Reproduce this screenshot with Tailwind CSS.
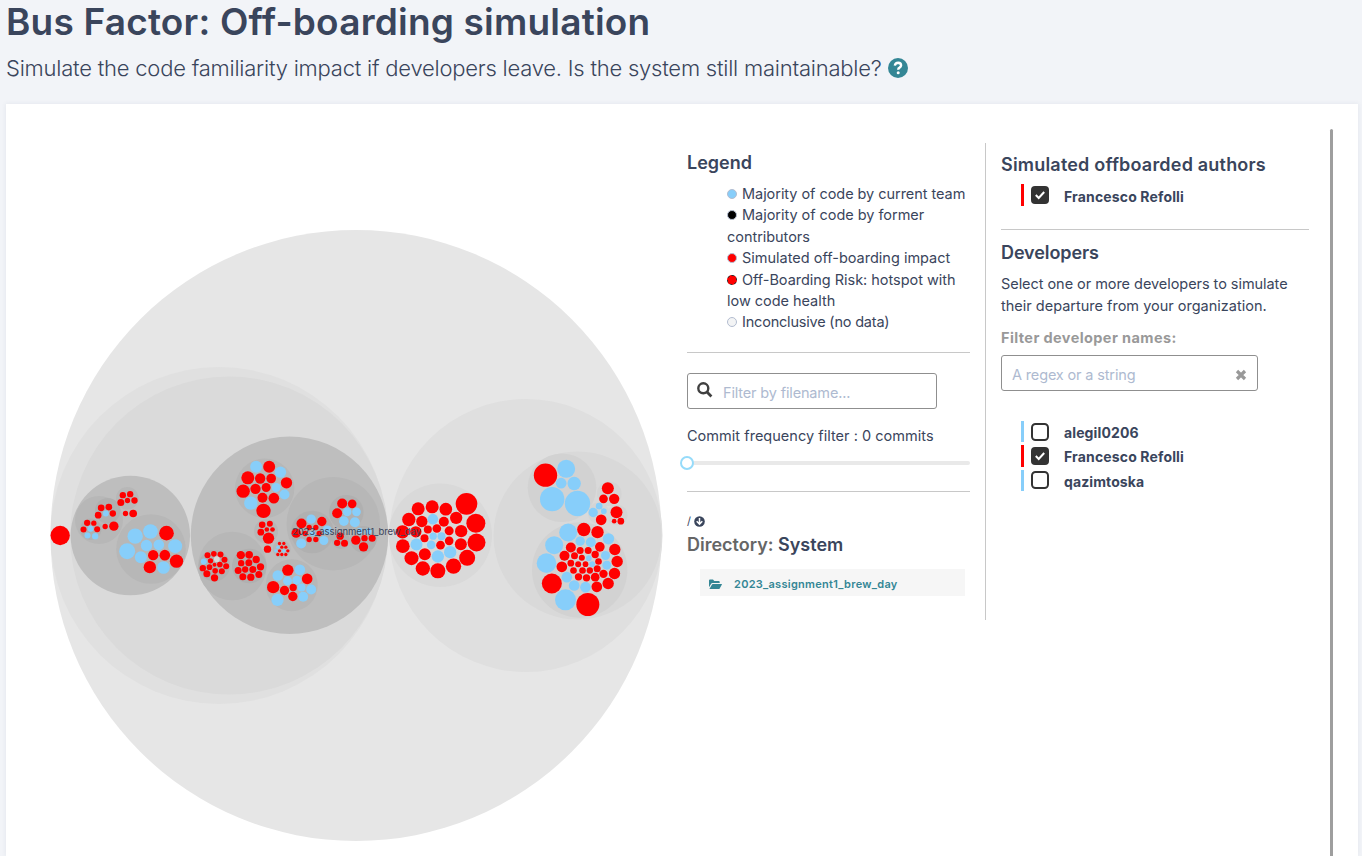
<!DOCTYPE html>
<html lang="en">
<head>
<meta charset="utf-8">
<title>Bus Factor: Off-boarding simulation</title>
<script src="https://cdn.jsdelivr.net/npm/@tailwindcss/browser@4"></script>
</head>
<body class="h-[856px] overflow-hidden bg-[#f2f4f8] font-['Inter',sans-serif] text-[#3a455c]">
<header class="h-[104px] pl-1.5">
  <h1 class="h-[44px] whitespace-nowrap text-[37px] leading-[44px] font-semibold tracking-[0.2px]">Bus Factor: Off-boarding simulation</h1>
  <p class="flex h-[48px] items-center gap-1.5 whitespace-nowrap text-[22px] font-light"><span class="tracking-[-0.225px]">Simulate the code familiarity impact if developers leave. Is the system still maintainable?</span>
    <svg class="size-5" viewBox="0 0 20 20"><circle cx="10" cy="10" r="10" fill="#348695"/><path d="M6.8 7.6Q7.3 4.8 10.2 4.8Q13.1 4.9 13.1 7.4Q13 8.7 11.5 9.6Q10.2 10.3 10.2 11.7" fill="none" stroke="#fff" stroke-width="2.4"/><circle cx="10.2" cy="14.8" r="1.5" fill="#fff"/></svg>
  </p>
</header>
<main class="ml-1.5 flex h-[752px] w-[1352px] bg-white shadow-[0_0_5px_rgba(40,50,90,0.08)]">
  <svg class="h-[752px] w-[681px] shrink-0" viewBox="6 104 681 752">
    <g id="bubbles"></g>
    <text x="292" y="535" font-size="9.5" font-family="Inter" fill="#3a455c" textLength="129">2023_assignment1_brew_day</text>
  </svg>
  <section class="mt-[39px] h-[477px] w-[299px] shrink-0 border-r border-[#c8c8c8]">
    <div class="h-[210px] w-[283px] border-b border-[#c8c8c8]">
      <h2 class="h-[40px] text-[18px] leading-[39px] font-semibold">Legend</h2>
      <ul class="pl-10 text-[14.5px] leading-[21.4px] whitespace-nowrap">
        <li class="tracking-[-0.05px]"><i class="mr-[5px] inline-block size-2.5 rounded-full border border-[#b3bdd0] bg-[#87cefa]"></i>Majority of code by current team</li>
        <li class="tracking-[-0.04px]"><i class="mr-[5px] inline-block size-2.5 rounded-full border border-[#b3bdd0] bg-black"></i>Majority of code by former<br>contributors</li>
        <li><i class="mr-[5px] inline-block size-2.5 rounded-full border border-[#b3bdd0] bg-[red]"></i>Simulated off-boarding impact</li>
        <li class="tracking-[-0.03px]"><i class="mr-[5px] inline-block size-2.5 rounded-full border border-dashed border-[#222] bg-[red]"></i>Off-Boarding Risk: hotspot with<br>low code health</li>
        <li class="tracking-[-0.2px]"><i class="mr-[5px] inline-block size-2.5 rounded-full border border-[#b3bdd0] bg-[#f3f4f5]"></i>Inconclusive (no data)</li>
      </ul>
    </div>
    <div class="h-[139px] w-[283px] border-b border-[#c8c8c8] pt-5">
      <div class="flex h-9 w-[250px] items-center rounded-[3px] border border-[#8f8f8f] pl-[9px]">
        <svg class="size-4 -translate-y-px" viewBox="0 0 16 16"><circle cx="6.3" cy="6.3" r="5" fill="none" stroke="#404040" stroke-width="2.4"/><path d="M10 10L14.4 14.4" stroke="#404040" stroke-width="2.8"/></svg>
        <span class="ml-2.5 pt-1 text-[14.5px] tracking-[-0.15px] text-[#aebad0]">Filter by filename...</span>
      </div>
      <p class="mt-4 text-[14.5px] leading-[22px] tracking-[0.03px] whitespace-nowrap">Commit frequency filter : 0 commits</p>
      <div class="mt-[14px] flex h-1 items-center rounded-full bg-[#e9e9e9]"><div class="-ml-[7px] size-3.5 shrink-0 rounded-full border-2 border-[#96dbfa] bg-white"></div></div>
    </div>
    <div class="pt-[20px]">
      <div class="flex h-[18px] items-center gap-[3px] text-[11px]"><span class="pt-px">/</span><svg class="size-[11px]" viewBox="0 0 11 11"><circle cx="5.5" cy="5.5" r="5.3" fill="#3a455c"/><path d="M5.5 2V8M2.7 5.3L5.5 8.1L8.3 5.3" fill="none" stroke="#fff" stroke-width="1.5"/></svg></div>
      <h2 class="mt-px text-[18px] leading-7 font-semibold whitespace-nowrap"><span class="text-[#666]">Directory:</span> System</h2>
      <div class="mt-[10px] ml-[13px] flex h-[27px] w-[265px] items-center bg-[#f6f6f6] pt-1 pl-[9px] text-[#348695]">
        <svg class="h-[11px] w-[13px]" viewBox="0 0 13 11"><path d="M0 8.2V1.6Q0 .6 1 .6H4L5.3 2H9.7Q10.7 2 10.7 3V4H3.4Q2.5 4 2 4.9ZM.4 9.9L3 5.4Q3.2 5 3.7 5H12.6Q13.2 5 12.9 5.6L10.7 9.5Q10.4 10 9.9 10H.7Q.3 10 .4 9.9Z" fill="#348695"/></svg>
        <span class="ml-3 text-[11px] font-semibold tracking-[0.28px]">2023_assignment1_brew_day</span>
      </div>
    </div>
  </section>
  <section class="w-[344px] shrink-0 pt-[46px] pl-[15px]">
    <div class="h-[80px] w-[308px] border-b border-[#c8c8c8]">
      <h2 class="h-[34px] pt-px text-[18px] leading-[28px] font-semibold tracking-[0.2px] whitespace-nowrap">Simulated offboarded authors</h2>
      <div class="ml-5 flex h-[22px] items-center border-l-3 border-[red] text-[14px] font-bold"><svg class="ml-[7px] size-[18px]" viewBox="0 0 18 18"><rect width="18" height="18" rx="4" fill="#333"/><path d="M4.8 9L7.7 12L13.2 6" fill="none" stroke="#fff" stroke-width="2"/></svg><span class="ml-[15px] pt-0.5 tracking-[0.15px]">Francesco Refolli</span></div>
    </div>
    <h2 class="mt-[9px] h-[34px] text-[18px] leading-[28px] font-semibold tracking-[-0.1px]">Developers</h2>
    <p class="text-[14.5px] leading-[22px] tracking-[-0.05px] whitespace-nowrap">Select one or more developers to simulate<br><span class="tracking-[0px]">their departure from your organization.</span></p>
    <p class="mt-2.5 text-[14.5px] leading-[22px] font-bold tracking-[0.4px] text-[#999]">Filter developer names:</p>
    <div class="mt-[6px] flex h-9 w-[257px] items-center justify-between rounded-[3px] border border-[#8f8f8f] px-2.5 text-[14.5px] text-[#aebad0]"><span class="pt-1 tracking-[-0.15px]">A regex or a string</span><svg class="mt-1 size-3" viewBox="0 0 12 12"><path d="M2 2L10 10M10 2L2 10" stroke="#999" stroke-width="3.2"/></svg></div>
    <div class="mt-[30px] ml-5 flex flex-col gap-[3px] text-[14px] font-bold">
      <div class="flex h-[21px] items-center border-l-3 border-[#87cefa]"><svg class="ml-[7px] size-[18px]" viewBox="0 0 18 18"><rect x="1" y="1" width="16" height="16" rx="3.5" fill="#fff" stroke="#333" stroke-width="2"/></svg><span class="ml-[15px] pt-0.5 tracking-[0.12px]">alegil0206</span></div>
      <div class="flex h-[22px] items-center border-l-3 border-[red]"><svg class="ml-[7px] size-[18px]" viewBox="0 0 18 18"><rect width="18" height="18" rx="4" fill="#333"/><path d="M4.8 9L7.7 12L13.2 6" fill="none" stroke="#fff" stroke-width="2"/></svg><span class="ml-[15px] tracking-[0.15px]">Francesco Refolli</span></div>
      <div class="flex h-[21px] items-center border-l-3 border-[#87cefa]"><svg class="ml-[7px] size-[18px] -translate-y-px" viewBox="0 0 18 18"><rect x="1" y="1" width="16" height="16" rx="3.5" fill="#fff" stroke="#333" stroke-width="2"/></svg><span class="ml-[15px] pt-0.5 tracking-[0.1px]">qazimtoska</span></div>
    </div>
  </section>
  <div class="mt-[25px] w-[3px] rounded-t bg-[#9e9e9e]"></div>
</main>
<script>
// Directory circles: colour, then cx, cy, r triples.
const shades = [
  ['#e6e6e6', [356,535.5,305.5]], ['#e0e0e0', [219,535.5,168.5]], ['#dadada', [229,535.5,159]],
  ['#dfdfdf', [526,535.5,136.5]], ['#d9d9d9', [440.3,535.3,51.7]],
  ['#d9d9d9', [577.5,535.5,84]], ['#d2d2d2', [562,487.7,34.3, 579.7,570,47.7]],
  ['#d4d4d4', [609.3,493.7,12.3, 617.3,515,10.3, 598.7,513.3,10.7]],
  ['#bebebe', [130.3,535.5,59.7, 289.5,535.3,98.7]],
  ['#b7b7b7', [99,520,24, 127.3,498.3,11.3, 151,549,34.8, 264.7,488.3,29.7, 232.3,566,34.3, 266,531.3,12, 281.7,549,9, 291.7,585.3,26, 333.3,523.7,46.7]],
  ['#b0b0b0', [107.7,510.7,12.7, 90.7,529.3,10.7, 214.3,565.7,15.7, 249.3,566,17.3, 312.3,532,21.3, 346.3,512.3,17.3, 340.7,540,9, 363.3,539.3,13.3]]
];
// File circles: cluster origin, colour, then "x y r" in thirds of a pixel.
const files = [
 [40,460,'red','60 226 29,248 105 9.5,270 102 9.5,242 127 10.5,262 121 8,283 121 9.5,256 160 8,279 160 11.5,183 143 10,206 141 10,174 165 10,218 160 9.5,141 188 9.5,161 189 8,130 208 9,171 207 9,195 199 8,221 198 14,379 219 22,339 285 15.5,374 285 16,409 303 20,329 321 18.5'],
 [40,460,'#87cefa','197 160 9,151 206 9,142 226 9,165 228 9.5,285 228 23,331 214 22,261 273 24,319 256 17,356 254 16,405 258 21,302 291 18,370 322 19'],
 [190,430,'red','237 110 18,173 143 19.5,210 145 15.5,243 145 14.5,289 158 17,159 183 20,196 176 15.5,228 172 13.5,217 203 15,251 204 16,220 242 21.5'],
 [190,430,'#87cefa','198 110 18,271 126 17,258 172 13.5,283 193 15,182 219 20'],
 [190,520,'red','216 14 10,239 11 9,212 36 10,230 28 7,247 28 7,235 54 17,232 87 11,268 70 5,281 70 5,275 81 5,287 81 5,268 92 5,293 92 5,263 103 5,275 103 5,287 103 5,52 105 9,71 101 8.5,91 103 9,61 122 8,103 119 9,38 144 9.5,58 141 8.5,73 134 6,89 133 8.5,108 138 9,75 152 8.5,95 153 9,50 161 10.5,73 173 11,152 105 12.5,177 104 11.5,198 118 11,153 129 9.5,176 128 10.5,211 140 11,144 151 10.5,165 148 9.5,188 148 10.5,206 163 10.5,158 170 10.5,182 171 11,293 150 17,249 201 18.5,283 211 14,309 202 11,308 229 14'],
 [190,520,'#87cefa','41 124 9,263 81 5,257 92 5,281 92 5,263 166 16,292 182 13.5,262 239 18.5,329 149 16,320 180 13.5'],
 [190,520,'#d9d9d9','80 117 8.5'],
 [285,470,'red','66 326 16,49 160 15,110 154 14,72 172 8,92 172 8,33 189 14,102 190 8,60 190 8,72 208 8,92 208 8,171 100 15,201 101 13,156 129 15,156 218 9.5,178 219 10.5,165 198 11,212 210 14,238 204 9.5,261 204 10.5,235 230 14'],
 [285,470,'#87cefa','78 358 15,49 352 12,54 380 15,78 147 14,126 180 14,82 190 8,48 220 15,116 211 13.5,186 125 13,214 125 13,176 153 14.5,209 156 15,224 182 9,250 183 9'],
 [385,480,'red','244 71 32.5,272 129 28.5,274 187 27,246 233 24,205 258 23,158 272 22.5,113 265 21.5,79 234 21,53 198 20.5,52 155 20,71 118 20,99 86 19.5,141 80 19.5,182 87 19,213 113 18.5,228 153 18.5,227 192 18,110 124 17,176 125 15,192 152 13.5,192 182 13,155 145 13,128 148 12,118 174 12,166 195 13,92 155 17,119 222 18'],
 [385,480,'#87cefa','143 117 16,144 168 11,169 168 12,138 194 13,94 193 18,158 229 18.5,195 216 18.5'],
 [520,450,'red','76 75 35,263 114 18,250 146 13,282 146 15.5,289 186 18,243 209 16,282 213 7,302 213 10'],
 [520,450,'#87cefa','138 56 27,123 99 16,162 100 20,96 147 36.5,172 160 38,219 187 14,237 168 10,251 183 8.5'],
 [520,515,'red','95 205 30,203 268 34.5,191 43 20,232 51 18.5,239 95 14.5,152 97 15,284 103 17,180 106 10.5,204 106 10.5,133 122 15,163 122 10.5,185 128 9,225 118 11,291 139 17,235 139 10,152 144 10,174 147 9,196 147 8.5,125 155 16,160 166 10,187 166 10,209 166 9.5,231 161 10.5,283 175 17,250 176 12.5,175 185 11,199 188 11,225 186 13,230 215 16,264 205 17'],
 [520,515,'#87cefa','144 52 27,102 90 27,79 144 29.5,136 254 31.5,265 71 17,180 78 14,212 81 15,256 121 13.5,206 129 8.5,216 147 8.5,260 150 13.5,140 186 16,162 211 16,196 216 16']
];
let out = '';
for (const [c, a] of shades) for (let i = 0; i < a.length; i += 3) out += `<circle cx="${a[i]}" cy="${a[i+1]}" r="${a[i+2]}" fill="${c}"/>`;
for (const [ox, oy, c, s] of files) for (const t of s.split(',')) { const [x, y, r] = t.split(' ').map(Number); out += `<circle cx="${ox + (x + .5)/3}" cy="${oy + (y + .5)/3}" r="${r/3}" fill="${c}"/>`; }
document.getElementById('bubbles').innerHTML = out;
</script>
</body>
</html>
